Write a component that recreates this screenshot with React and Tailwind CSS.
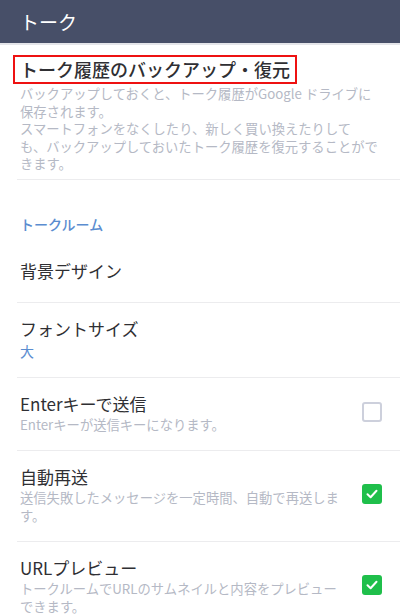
const FONT = { fontFamily: '"Noto Sans CJK JP", "Noto Sans", sans-serif' }

function Check({ on }) {
  if (!on) {
    return <div className="w-5 h-5 rounded-[3px] border-2 border-[#cdd0dc] bg-white" />
  }
  return (
    <div className="w-5 h-5 rounded-[3px] bg-[#1fbf4b] flex items-center justify-center">
      <svg width="14" height="14" viewBox="0 0 14 14" fill="none">
        <path d="M2.5 7.3 L5.6 10.2 L11.5 3.8" stroke="white" strokeWidth="2" strokeLinecap="round" strokeLinejoin="round" />
      </svg>
    </div>
  )
}

const ROWS = [
  { title: 'Enterキーで送信', sub: <>Enterキーが送信キーになります。</>, check: false },
  { title: '自動再送', sub: <>送信失敗したメッセージを一定時間、自動で再送しま<br />す。</>, check: true },
  { title: 'URLプレビュー', sub: <>トークルームでURLのサムネイルと内容をプレビュー<br />できます。</>, check: true },
]

export default function App() {
  return (
    <div className="w-[400px] h-[614px] overflow-hidden bg-white" style={FONT}>
      <div className="h-[43px] bg-[#474f68] flex items-center px-5">
        <span className="text-white text-[19px] leading-none">トーク</span>
      </div>
      <div className="h-[2px] bg-[#e4e5e9]" />

      <div className="pl-5 pr-4 pt-[10px] pb-[6px]">
        <div className="inline-block -ml-[7px] px-[5px] border-2 border-[#ee1111]">
          <span className="text-[18px] leading-[25px] font-medium text-[#2f2f33]">トーク履歴のバックアップ・復元</span>
        </div>
        <div className="mt-px text-[13.3px] leading-[17.5px] text-[#b5b9c5]">
          バックアップしておくと、トーク履歴がGoogle ドライブに<br />
          保存されます。<br />
          スマートフォンをなくしたり、新しく買い換えたりして<br />
          も、バックアップしておいたトーク履歴を復元することがで<br />
          きます。
        </div>
      </div>

      {/* トークルーム */}
      <div className="ml-[17px] border-t border-[#ececee]">
        <div className="-ml-[17px] pl-5 pt-[35px] pb-[6px] text-[14px] leading-[19px] font-medium text-[#5b8dd0]">
          トークルーム
        </div>
        <div className="-ml-[17px] pl-5 py-[18px] text-[17px] leading-[26px] text-[#2f2f33]">背景デザイン</div>
      </div>

      <div className="ml-[17px] border-t border-[#ececee]">
        <div className="-ml-[17px] pl-5 pt-[13px] pb-[16px]">
          <div className="text-[17px] leading-[25px] text-[#2f2f33]">フォントサイズ</div>
          <div className="text-[14px] leading-[20px] text-[#5b8dd0]">大</div>
        </div>
      </div>

      {ROWS.map((r) => (
        <div key={r.title} className="ml-[17px] border-t border-[#ececee]">
          <div className="-ml-[17px] flex items-center pl-5 pr-[18px] pt-[13px] pb-[17px]">
            <div className="flex-1">
              <div className="text-[17px] leading-[25px] text-[#2f2f33]">{r.title}</div>
              <div className="text-[13.3px] leading-[17.5px] text-[#b5b9c5]">{r.sub}</div>
            </div>
            <Check on={r.check} />
          </div>
        </div>
      ))}
    </div>
  )
}
